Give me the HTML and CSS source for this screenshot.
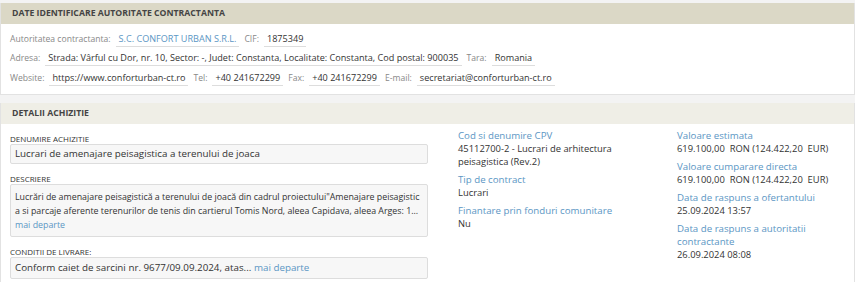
FILE: index.html
```html
<!DOCTYPE html>
<html lang="ro">
<head>
  <meta charset="UTF-8">
  <title>Detalii achizitie</title>
  <link rel="stylesheet" href="styles.css">
</head>
<body>

<div class="panel">
  <div class="panel-head dark">DATE IDENTIFICARE AUTORITATE CONTRACTANTA</div>
  <div class="panel-body info">
    <div class="row">
      <span class="lbl">Autoritatea contractanta:</span>
      <span class="val link">S.C. CONFORT URBAN S.R.L.</span>
      <span class="lbl">CIF:</span>
      <span class="val">1875349</span>
    </div>
    <div class="row">
      <span class="lbl">Adresa:</span>
      <span class="val">Strada: Vârful cu Dor, nr. 10, Sector: -, Judet: Constanta, Localitate: Constanta, Cod postal: 900035</span>
      <span class="lbl">Tara:</span>
      <span class="val">Romania</span>
    </div>
    <div class="row">
      <span class="lbl">Website:</span>
      <span class="val">https://www.conforturban-ct.ro</span>
      <span class="lbl">Tel:</span>
      <span class="val">+40 241672299</span>
      <span class="lbl">Fax:</span>
      <span class="val">+40 241672299</span>
      <span class="lbl">E-mail:</span>
      <span class="val">secretariat@conforturban-ct.ro</span>
    </div>
  </div>
</div>

<div class="panel">
  <div class="panel-head light">DETALII ACHIZITIE</div>
  <div class="panel-body details">
    <div class="col-left">
      <div class="field-title">DENUMIRE ACHIZITIE</div>
      <div class="field-box">Lucrari de amenajare peisagistica a terenului de joaca</div>

      <div class="field-title">DESCRIERE</div>
      <div class="field-box desc">
        Lucrări de amenajare peisagistică a terenului de joacă din cadrul proiectului"Amenajare peisagistic<br>
        a si parcaje aferente terenurilor de tenis din cartierul Tomis Nord, aleea Capidava, aleea Arges: 1...<br>
        <a href="#">mai departe</a>
      </div>

      <div class="field-title">CONDITII DE LIVRARE:</div>
      <div class="field-box last">Conform caiet de sarcini nr. 9677/09.09.2024, atas... <a href="#">mai departe</a></div>
    </div>

    <div class="col-mid">
      <div class="item">
        <div class="item-title">Cod si denumire CPV</div>
        <div class="item-val">45112700-2 - Lucrari de arhitectura peisagistica (Rev.2)</div>
      </div>
      <div class="item">
        <div class="item-title">Tip de contract</div>
        <div class="item-val">Lucrari</div>
      </div>
      <div class="item">
        <div class="item-title">Finantare prin fonduri comunitare</div>
        <div class="item-val">Nu</div>
      </div>
    </div>

    <div class="col-right">
      <div class="item">
        <div class="item-title">Valoare estimata</div>
        <div class="item-val">619.100,00&nbsp; RON (124.422,20&nbsp; EUR)</div>
      </div>
      <div class="item">
        <div class="item-title">Valoare cumparare directa</div>
        <div class="item-val">619.100,00&nbsp; RON (124.422,20&nbsp; EUR)</div>
      </div>
      <div class="item">
        <div class="item-title">Data de raspuns a ofertantului</div>
        <div class="item-val">25.09.2024 13:57</div>
      </div>
      <div class="item">
        <div class="item-title">Data de raspuns a autoritatii contractante</div>
        <div class="item-val">26.09.2024 08:08</div>
      </div>
    </div>
  </div>
</div>

</body>
</html>
```

FILE: styles.css
```css
body {
  font-family: "Open Sans", Arial, sans-serif;
  font-size: 9.4px;
  color: #333;
  background-color: #f3f3f3;
  margin: 0;
  padding: 3px 0 0 0;
}

.panel {
  background-color: white;
  border: 1px solid #e2e2e2;
  border-top: none;
  margin-bottom: 8px;
}

.panel-head {
  height: 21px;
  line-height: 21px;
  padding: 0 11px;
  font-weight: bold;
  font-size: 8.7px;
  color: #444;
}

.panel-head.dark {
  background-color: #dbd8c6;
}

.panel-head.light {
  background-color: #efeee6;
}

.info {
  padding: 5px 9px 6px;
}

.row {
  display: flex;
  align-items: center;
  height: 19.5px;
}

.lbl {
  color: #888;
  font-size: 8.6px;
  margin-right: 5px;
}

.val {
  font-size: 9.1px;
  border-bottom: 1px solid #ddd;
  padding: 1px 3px;
  margin-right: 5px;
}

.val.link {
  color: #5b96c4;
}

.details {
  display: flex;
  padding: 5px 0 3px 9px;
}

.col-left {
  width: 418px;
  padding-top: 5px;
}

.col-mid {
  width: 175px;
  margin-left: 30px;
}

.col-right {
  width: 165px;
  margin-left: 44px;
}

.field-title {
  font-size: 8px;
  line-height: 10px;
  height: 10px;
  text-transform: uppercase;
}

.field-box {
  background-color: #f7f7f7;
  border: 1px solid #ddd;
  border-radius: 2px;
  padding: 2px 4px;
  font-size: 9.8px;
  line-height: 14px;
  margin-bottom: 10px;
}

.field-box.desc {
  padding: 5px 4px 4px;
  font-size: 8.85px;
  white-space: nowrap;
  overflow: hidden;
}

.field-box.last {
  padding: 3px 4px;
  margin-bottom: 0;
}

a {
  color: #5b96c4;
  text-decoration: none;
}

.item {
  margin-bottom: 5px;
}

.item-title {
  color: #5b96c4;
  font-size: 9.7px;
  line-height: 13px;
}

.item-val {
  line-height: 13px;
}
```
